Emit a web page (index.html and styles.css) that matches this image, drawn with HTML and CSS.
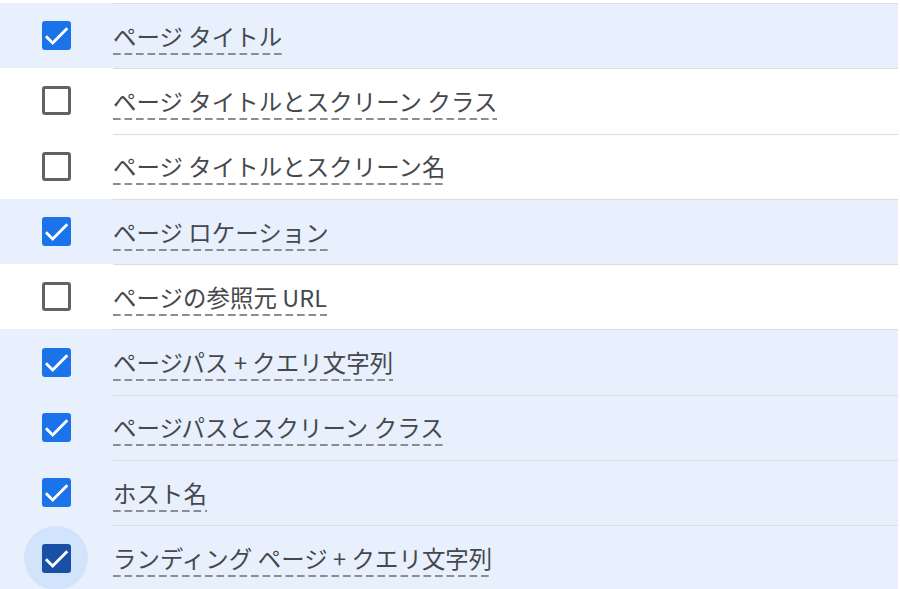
FILE: index.html
```html
<!DOCTYPE html>
<html lang="ja">
<head>
<meta charset="utf-8">
<link rel="stylesheet" href="styles.css">
</head>
<body>
<div class="list">
  <div class="row selected">
    <div class="cb-cell"><span class="cb checked"><svg viewBox="0 0 24 24"><path d="M2.6 12.6 8.6 18.6 21.6 5.6"/></svg></span></div>
    <div class="label"><span class="txt">ページ タイトル</span></div>
  </div>
  <div class="row">
    <div class="cb-cell"><span class="cb"></span></div>
    <div class="label"><span class="txt">ページ タイトルとスクリーン クラス</span></div>
  </div>
  <div class="row">
    <div class="cb-cell"><span class="cb"></span></div>
    <div class="label"><span class="txt">ページ タイトルとスクリーン名</span></div>
  </div>
  <div class="row selected">
    <div class="cb-cell"><span class="cb checked"><svg viewBox="0 0 24 24"><path d="M2.6 12.6 8.6 18.6 21.6 5.6"/></svg></span></div>
    <div class="label"><span class="txt">ページ ロケーション</span></div>
  </div>
  <div class="row">
    <div class="cb-cell"><span class="cb"></span></div>
    <div class="label"><span class="txt">ページの参照元 URL</span></div>
  </div>
  <div class="row selected">
    <div class="cb-cell"><span class="cb checked"><svg viewBox="0 0 24 24"><path d="M2.6 12.6 8.6 18.6 21.6 5.6"/></svg></span></div>
    <div class="label"><span class="txt">ページパス + クエリ文字列</span></div>
  </div>
  <div class="row selected">
    <div class="cb-cell"><span class="cb checked"><svg viewBox="0 0 24 24"><path d="M2.6 12.6 8.6 18.6 21.6 5.6"/></svg></span></div>
    <div class="label"><span class="txt">ページパスとスクリーン クラス</span></div>
  </div>
  <div class="row selected">
    <div class="cb-cell"><span class="cb checked"><svg viewBox="0 0 24 24"><path d="M2.6 12.6 8.6 18.6 21.6 5.6"/></svg></span></div>
    <div class="label"><span class="txt">ホスト名</span></div>
  </div>
  <div class="row selected">
    <div class="cb-cell"><span class="halo"><span class="cb checked focused"><svg viewBox="0 0 24 24"><path d="M2.6 12.6 8.6 18.6 21.6 5.6"/></svg></span></span></div>
    <div class="label"><span class="txt">ランディング ページ + クエリ文字列</span></div>
  </div>
</div>
</body>
</html>
```
FILE: styles.css
```css
html, body {
  margin: 0;
  padding: 0;
  background: #ffffff;
}
body {
  font-family: "Noto Sans CJK JP", "Noto Sans", sans-serif;
  overflow: hidden;
}
.list {
  width: 898px;
  padding-top: 3px;
}
.row {
  display: flex;
  height: 65.3px;
  background: #ffffff;
}
.row.selected {
  background: #e8f0fe;
}
.cb-cell {
  width: 113px;
  flex: none;
  display: flex;
  align-items: center;
  justify-content: center;
  padding-right: 1px;
  box-sizing: border-box;
}
.cb {
  width: 29px;
  height: 29px;
  box-sizing: border-box;
  border: 3px solid #5f6368;
  border-radius: 3px;
  display: flex;
  align-items: center;
  justify-content: center;
}
.cb.checked {
  border: none;
  background: #1a73e8;
}
.cb.focused {
  background: #1a4fa6;
}
.cb svg {
  width: 27px;
  height: 27px;
  fill: none;
  stroke: #ffffff;
  stroke-width: 2.6;
}
.halo {
  width: 64px;
  height: 64px;
  border-radius: 50%;
  background: #d2e3fc;
  display: flex;
  align-items: center;
  justify-content: center;
}
.label {
  flex: 1;
  border-top: 1px solid #dadce0;
  display: flex;
  align-items: center;
  padding-top: 3px;
}
.txt {
  font-size: 23.4px;
  letter-spacing: 0.1px;
  line-height: 30px;
  color: #45484c;
  padding-bottom: 4px;
  background-image: linear-gradient(to right, #8a8e93 70%, transparent 70%);
  background-size: 11.5px 2px;
  background-repeat: repeat-x;
  background-position: 0 100%;
}
```
